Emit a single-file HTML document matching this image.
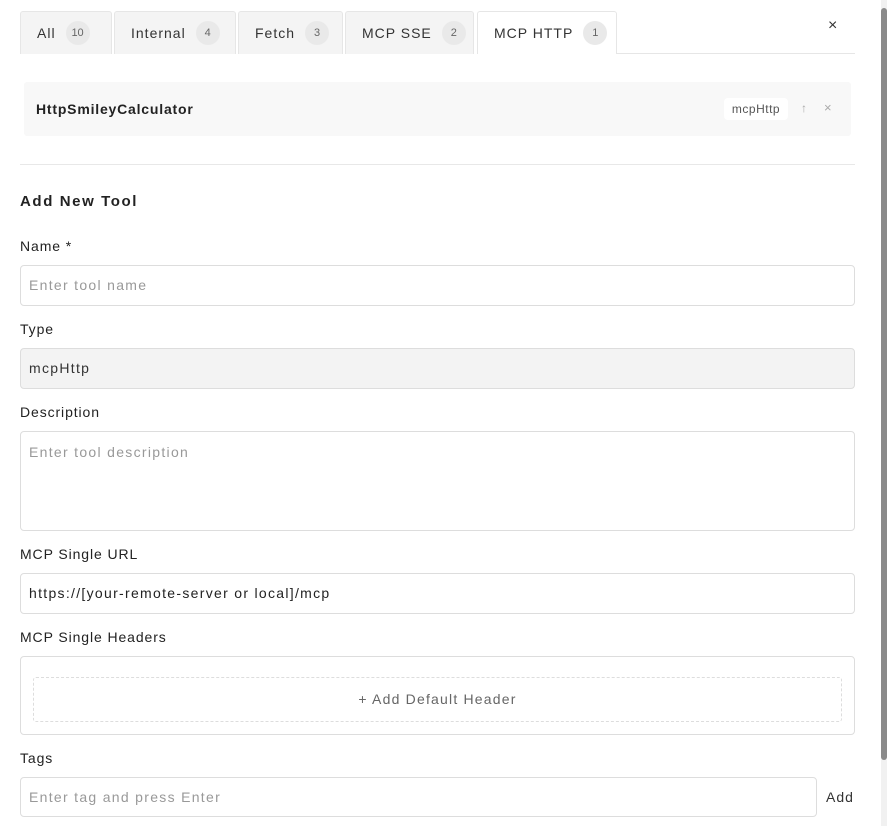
<!DOCTYPE html>
<html><head><style>
*{box-sizing:border-box;margin:0;padding:0}
body{width:887px;height:826px;overflow:hidden;background:#fff;font-family:"Liberation Sans",sans-serif;color:#222;letter-spacing:1px;position:relative;font-size:14px}
.a{position:absolute}
.tab{position:absolute;top:11px;height:43px;background:#f4f4f4;border:1px solid #e6e6e6;border-bottom:none;border-radius:3px 3px 0 0;display:flex;align-items:center;padding-left:16px;font-size:14px;color:#333}
.tab b{font-weight:normal;display:inline-block;width:24px;height:24px;border-radius:12px;background:#e9e9e9;font-size:11px;color:#666;text-align:center;line-height:24px;margin-left:10px;letter-spacing:0}
.lbl{position:absolute;left:20px;font-size:14px;color:#222;letter-spacing:0.9px}
.inp{position:absolute;left:20px;width:835px;height:41px;border:1px solid #ddd;border-radius:4px;padding-left:8px;line-height:39px;font-size:14px;color:#999;letter-spacing:1.3px}
</style></head><body>
<div class="tab" style="left:20px;width:92px">All<b>10</b></div>
<div class="tab" style="left:114px;width:122px">Internal<b>4</b></div>
<div class="tab" style="left:238px;width:105px">Fetch<b>3</b></div>
<div class="tab" style="left:345px;width:129px">MCP SSE<b>2</b></div>
<div class="tab" style="left:477px;width:140px;background:#fff;height:43px;z-index:2">MCP HTTP<b>1</b></div>
<div class="a" style="left:616px;top:53px;width:239px;height:1px;background:#e6e6e6"></div>
<div class="a" style="left:828px;top:17px;font-size:16px;color:#333">×</div>
<div class="a" style="left:24px;top:82px;width:827px;height:54px;background:#f8f8f8;border-radius:3px"></div>
<div class="a" style="left:36px;top:101px;font-weight:bold;font-size:14px;letter-spacing:0.8px">HttpSmileyCalculator</div>
<div class="a" style="left:724px;top:98px;width:64px;height:22px;background:#fff;border-radius:4px;font-size:12px;color:#555;text-align:center;line-height:22px;letter-spacing:0.5px">mcpHttp</div>
<div class="a" style="left:801px;top:101px;font-size:12px;color:#aaa">↑</div>
<div class="a" style="left:824px;top:100px;font-size:13px;color:#aaa">×</div>
<div class="a" style="left:20px;top:164px;width:835px;height:1px;background:#e8e8e8"></div>
<div class="a" style="left:20px;top:193px;font-weight:bold;font-size:15px;letter-spacing:1.6px">Add New Tool</div>
<div class="lbl" style="top:238px">Name *</div>
<div class="inp" style="top:265px">Enter tool name</div>
<div class="lbl" style="top:321px">Type</div>
<div class="inp" style="top:348px;background:#f3f3f3;color:#333">mcpHttp</div>
<div class="lbl" style="top:404px">Description</div>
<div class="inp" style="top:431px;height:100px;line-height:40px">Enter tool description</div>
<div class="lbl" style="top:546px">MCP Single URL</div>
<div class="inp" style="top:573px;color:#222">https://[your-remote-server or local]/mcp</div>
<div class="lbl" style="top:629px">MCP Single Headers</div>
<div class="inp" style="top:656px;height:79px"></div>
<div class="a" style="left:33px;top:677px;width:809px;height:45px;border:1px dashed #ddd;border-radius:3px;text-align:center;line-height:43px;color:#666;font-size:14px;letter-spacing:1.2px">+ Add Default Header</div>
<div class="lbl" style="top:750px">Tags</div>
<div class="inp" style="top:777px;width:797px;height:40px;line-height:38px">Enter tag and press Enter</div>
<div class="a" style="left:826px;top:789px;color:#333">Add</div>
<div class="a" style="left:881px;top:0;width:6px;height:826px;background:#f1f1f1"></div>
<div class="a" style="left:881px;top:8px;width:6px;height:752px;background:#8a8a8a;border-radius:3px"></div>
</body></html>
